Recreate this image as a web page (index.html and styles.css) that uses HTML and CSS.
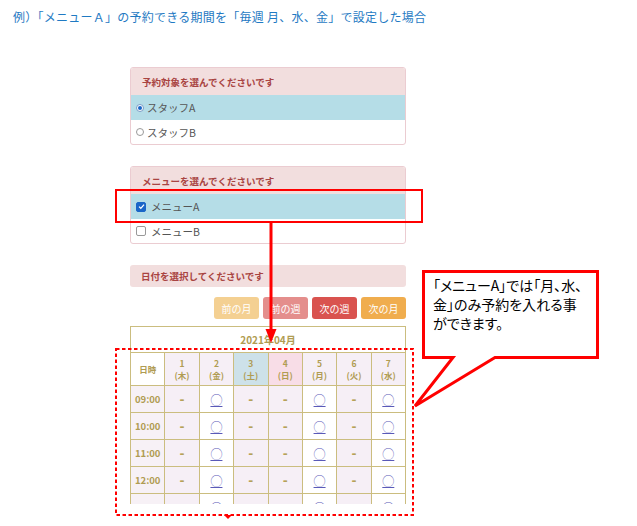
FILE: index.html
```html
<!DOCTYPE html>
<html lang="ja">
<head>
<meta charset="utf-8">
<link rel="stylesheet" href="styles.css">
</head>
<body>
<div class="page">
  <p class="title">例）「メニューＡ」の予約できる期間を「毎週 月、水、金」で設定した場合</p>
  <div class="main">
    <div class="panel">
      <div class="panel-head">予約対象を選んでくださいです</div>
      <div class="opt sel"><span class="radio on"></span>スタッフA</div>
      <div class="opt last"><span class="radio"></span>スタッフB</div>
    </div>
    <div class="panel gap">
      <div class="panel-head">メニューを選んでくださいです</div>
      <div class="opt sel"><span class="check on"><svg viewBox="0 0 10 10" width="7" height="7"><path d="M1.5 5.2 L4 7.6 L8.6 2.2" fill="none" stroke="#fff" stroke-width="1.8"/></svg></span>メニューA</div>
      <div class="opt last"><span class="check"></span>メニューB</div>
    </div>
    <div class="date-head">日付を選択してくださいです</div>
    <div class="btns">
      <span class="btn b-pm">前の月</span>
      <span class="btn b-pw">前の週</span>
      <span class="btn b-nw">次の週</span>
      <span class="btn b-nm">次の月</span>
    </div>
    <div class="cal-wrap">
      <table class="cal">
        <tr class="r-title"><th colspan="8">2021年04月</th></tr>
        <tr class="r-head">
          <th class="c-white">日時</th>
          <th class="c-lav">1<br>(木)</th>
          <th class="c-lav">2<br>(金)</th>
          <th class="c-sat">3<br>(土)</th>
          <th class="c-sun">4<br>(日)</th>
          <th class="c-lav">5<br>(月)</th>
          <th class="c-lav">6<br>(火)</th>
          <th class="c-lav">7<br>(水)</th>
        </tr>
        <tr><th class="time">09:00</th><td class="x">-</td><td class="o"><a>◯</a></td><td class="x">-</td><td class="x">-</td><td class="o"><a>◯</a></td><td class="x">-</td><td class="o"><a>◯</a></td></tr>
        <tr><th class="time">10:00</th><td class="x">-</td><td class="o"><a>◯</a></td><td class="x">-</td><td class="x">-</td><td class="o"><a>◯</a></td><td class="x">-</td><td class="o"><a>◯</a></td></tr>
        <tr><th class="time">11:00</th><td class="x">-</td><td class="o"><a>◯</a></td><td class="x">-</td><td class="x">-</td><td class="o"><a>◯</a></td><td class="x">-</td><td class="o"><a>◯</a></td></tr>
        <tr><th class="time">12:00</th><td class="x">-</td><td class="o"><a>◯</a></td><td class="x">-</td><td class="x">-</td><td class="o"><a>◯</a></td><td class="x">-</td><td class="o"><a>◯</a></td></tr>
        <tr><th class="time">13:00</th><td class="x">-</td><td class="o"><a>◯</a></td><td class="x">-</td><td class="x">-</td><td class="o"><a>◯</a></td><td class="x">-</td><td class="o"><a>◯</a></td></tr>
      </table>
    </div>
  </div>

  <svg class="overlay" width="637" height="526" viewBox="0 0 637 526">
    <rect x="116" y="190" width="306" height="32" fill="none" stroke="#ff0000" stroke-width="2"/>
    <line x1="271" y1="222" x2="271" y2="331" stroke="#ff0000" stroke-width="3"/>
    <polygon points="265.5,329 276.5,329 271,343" fill="#ff0000"/>
    <rect x="116" y="349" width="297" height="166" fill="none" stroke="#ff0000" stroke-width="2" stroke-dasharray="3.5 2.5"/>
    <polygon points="224,515 232,515 228,519" fill="#ff0000"/>
    <path d="M423.5 271.5 H597.5 V357.5 H495 L415 406 L453 357.5 H423.5 Z" fill="#fff" stroke="#ff0000" stroke-width="3" stroke-linejoin="miter"/>
  </svg>
  <p class="callout">「メニューA」では「月、水、<br>金」のみ予約を入れる事<br>ができます。</p>
</div>
</body>
</html>
```

FILE: styles.css
```css
html, body {
  margin: 0;
  padding: 0;
  background: #fff;
}

body {
  font-family: "Noto Sans CJK JP", "Noto Sans", sans-serif;
}

.page {
  position: relative;
  width: 637px;
  height: 526px;
  overflow: hidden;
}

.title {
  margin: 0;
  padding: 10px 0 0 13px;
  font-size: 12px;
  letter-spacing: 0.25px;
  line-height: 14px;
  color: #1f7ac3;
  white-space: nowrap;
}

.main {
  margin: 43px 0 0 130px;
  width: 276px;
}

.panel {
  border: 1px solid #ebccd1;
  border-radius: 3px;
  background: #fff;
  overflow: hidden;
}

.panel.gap {
  margin-top: 21px;
}

.panel-head {
  height: 27px;
  display: flex;
  align-items: center;
  padding-left: 11px;
  background: #f2dede;
  color: #a94442;
  font-weight: bold;
  font-size: 9.5px;
}

.opt {
  height: 25px;
  display: flex;
  align-items: center;
  padding-left: 5px;
  gap: 3px;
  font-size: 10.5px;
  color: #555;
}

.opt.last {
  height: 24px;
}

.opt.sel {
  background: #b5dde7;
}

.radio {
  width: 8px;
  height: 8px;
  border: 1px solid #999;
  border-radius: 50%;
  background: #fff;
  display: flex;
  align-items: center;
  justify-content: center;
  box-sizing: border-box;
}

.radio.on {
  border-color: #7a9cc6;
}

.radio.on::after {
  content: "";
  width: 4px;
  height: 4px;
  border-radius: 50%;
  background: #1a66c8;
}

.check {
  width: 8px;
  height: 8px;
  border: 1px solid #999;
  border-radius: 2px;
  background: #fff;
  display: flex;
  align-items: center;
  justify-content: center;
  margin-right: 2px;
}

.check.on {
  background: #1a66c8;
  border-color: #1a66c8;
}

.date-head {
  margin-top: 21px;
  height: 22px;
  display: flex;
  align-items: center;
  padding-left: 11px;
  background: #f2dede;
  border-radius: 3px;
  color: #a94442;
  font-weight: bold;
  font-size: 9.5px;
}

.btns {
  margin-top: 10px;
  display: flex;
  justify-content: flex-end;
  gap: 4px;
}

.btn {
  width: 45px;
  height: 22px;
  border-radius: 3px;
  display: flex;
  align-items: center;
  justify-content: center;
  color: #fff;
  font-size: 10px;
}

.b-pm { background: #f4d092; }
.b-pw { background: #e48e8c; }
.b-nw { background: #d9534f; }
.b-nm { background: #f0ad4e; }

.cal-wrap {
  margin-top: 7px;
  height: 178px;
  overflow: hidden;
}

.cal {
  width: 276px;
  border-collapse: collapse;
  table-layout: fixed;
  color: #b09c52;
  font-weight: bold;
}

.cal th, .cal td {
  border: 1px solid #cbbd7f;
  padding: 0;
  text-align: center;
}

.r-title th {
  height: 25px;
  font-size: 10px;
  background: #fff;
}

.r-head th {
  height: 32px;
  font-size: 8.5px;
  line-height: 12px;
}

.c-white { background: #fff; }
.c-lav { background: #f6eff6; }
.c-sat { background: #cde1e9; }
.c-sun { background: #f8dde7; }

.cal td, .cal .time {
  height: 26px;
  line-height: 14px;
}

.cal .time {
  background: #f7f1f6;
  font-size: 9.5px;
}

.cal td.x {
  background: #f6eff6;
  font-size: 13px;
  font-weight: 900;
  color: #b5a158;
}

.cal td.o {
  background: #fff;
}

.cal td.o a {
  color: #5a5ab8;
  text-decoration: underline;
  font-weight: normal;
  font-size: 12px;
}

.overlay {
  position: absolute;
  left: 0;
  top: 0;
  pointer-events: none;
}

.callout {
  position: absolute;
  left: 433px;
  top: 276px;
  margin: 0;
  font-size: 14px;
  line-height: 19px;
  color: #000;
  font-feature-settings: "palt";
  white-space: nowrap;
}
```
